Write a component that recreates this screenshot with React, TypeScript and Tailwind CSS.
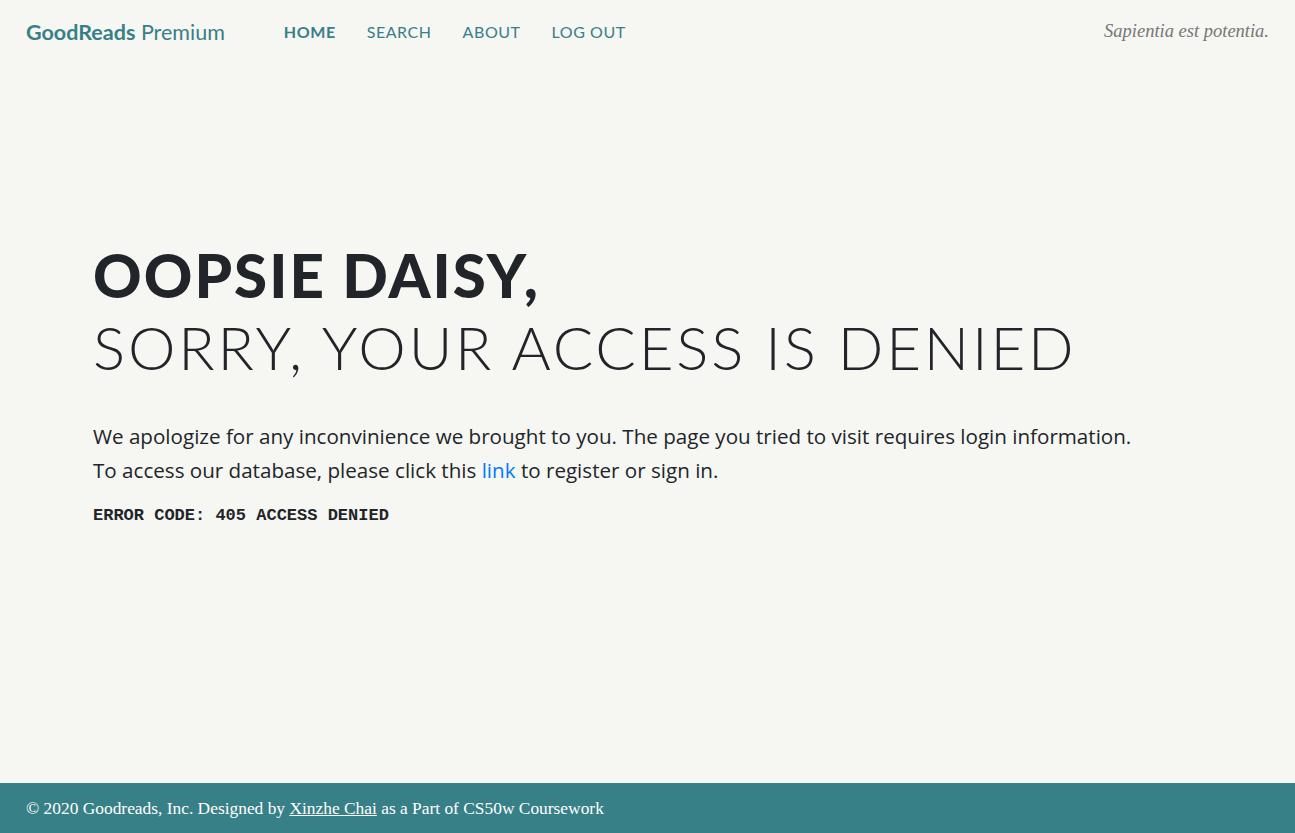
import React from 'react';

const navLinks = [
  { label: 'HOME', active: true },
  { label: 'SEARCH' },
  { label: 'ABOUT' },
  { label: 'LOG OUT' },
];

const Navbar: React.FC = () => (
  <nav className="flex items-center h-16 px-[26px]">
    <a className="text-[21.5px] text-[#388087] font-['Lato',sans-serif]">
      <span className="font-bold">GoodReads</span> Premium
    </a>
    <ul className="flex items-center gap-[31px] ml-[59px] font-['Lato',sans-serif]">
      {navLinks.map((link) => (
        <li key={link.label}>
          <a
            className={`text-[16px] tracking-[0.035em] text-[#388087] ${link.active ? 'font-bold' : ''}`}
          >
            {link.label}
          </a>
        </li>
      ))}
    </ul>
    <span className="ml-auto italic text-[18.5px] text-[#777] font-['Liberation_Serif',serif]">
      Sapientia est potentia.
    </span>
  </nav>
);

const App: React.FC = () => {
  return (
    <div className="min-h-screen flex flex-col bg-[#f6f6f2] text-[#212529]">
      <Navbar />

      <main className="flex-1 flex flex-col justify-center px-[93px] pb-[80px]">
        <h1 className="font-['Lato',sans-serif] text-[60px] leading-[72px] mb-[36px]">
          <span className="font-black tracking-[0.034em]">OOPSIE DAISY,</span>
          <br />
          <span className="font-light tracking-[0.047em]">SORRY, YOUR ACCESS IS DENIED</span>
        </h1>
        <p className="font-['Open_Sans',sans-serif] text-[20.6px] leading-[34px]">
          We apologize for any inconvinience we brought to you. The page you tried to visit requires login information.
          <br />
          To access our database, please click this <a className="text-[#007bff]">link</a> to register or sign in.
        </p>
        <p className="mt-[16px] font-['Liberation_Mono',monospace] font-bold text-[17px]">
          ERROR CODE: 405 ACCESS DENIED
        </p>
      </main>

      <footer className="h-[50px] flex items-center px-[26px] bg-[#388087] text-white font-['Liberation_Serif',serif] text-[17.4px]">
        © 2020 Goodreads, Inc. Designed by&nbsp;<a className="underline">Xinzhe Chai</a>&nbsp;as a Part of CS50w Coursework
      </footer>
    </div>
  );
};

export default App;
